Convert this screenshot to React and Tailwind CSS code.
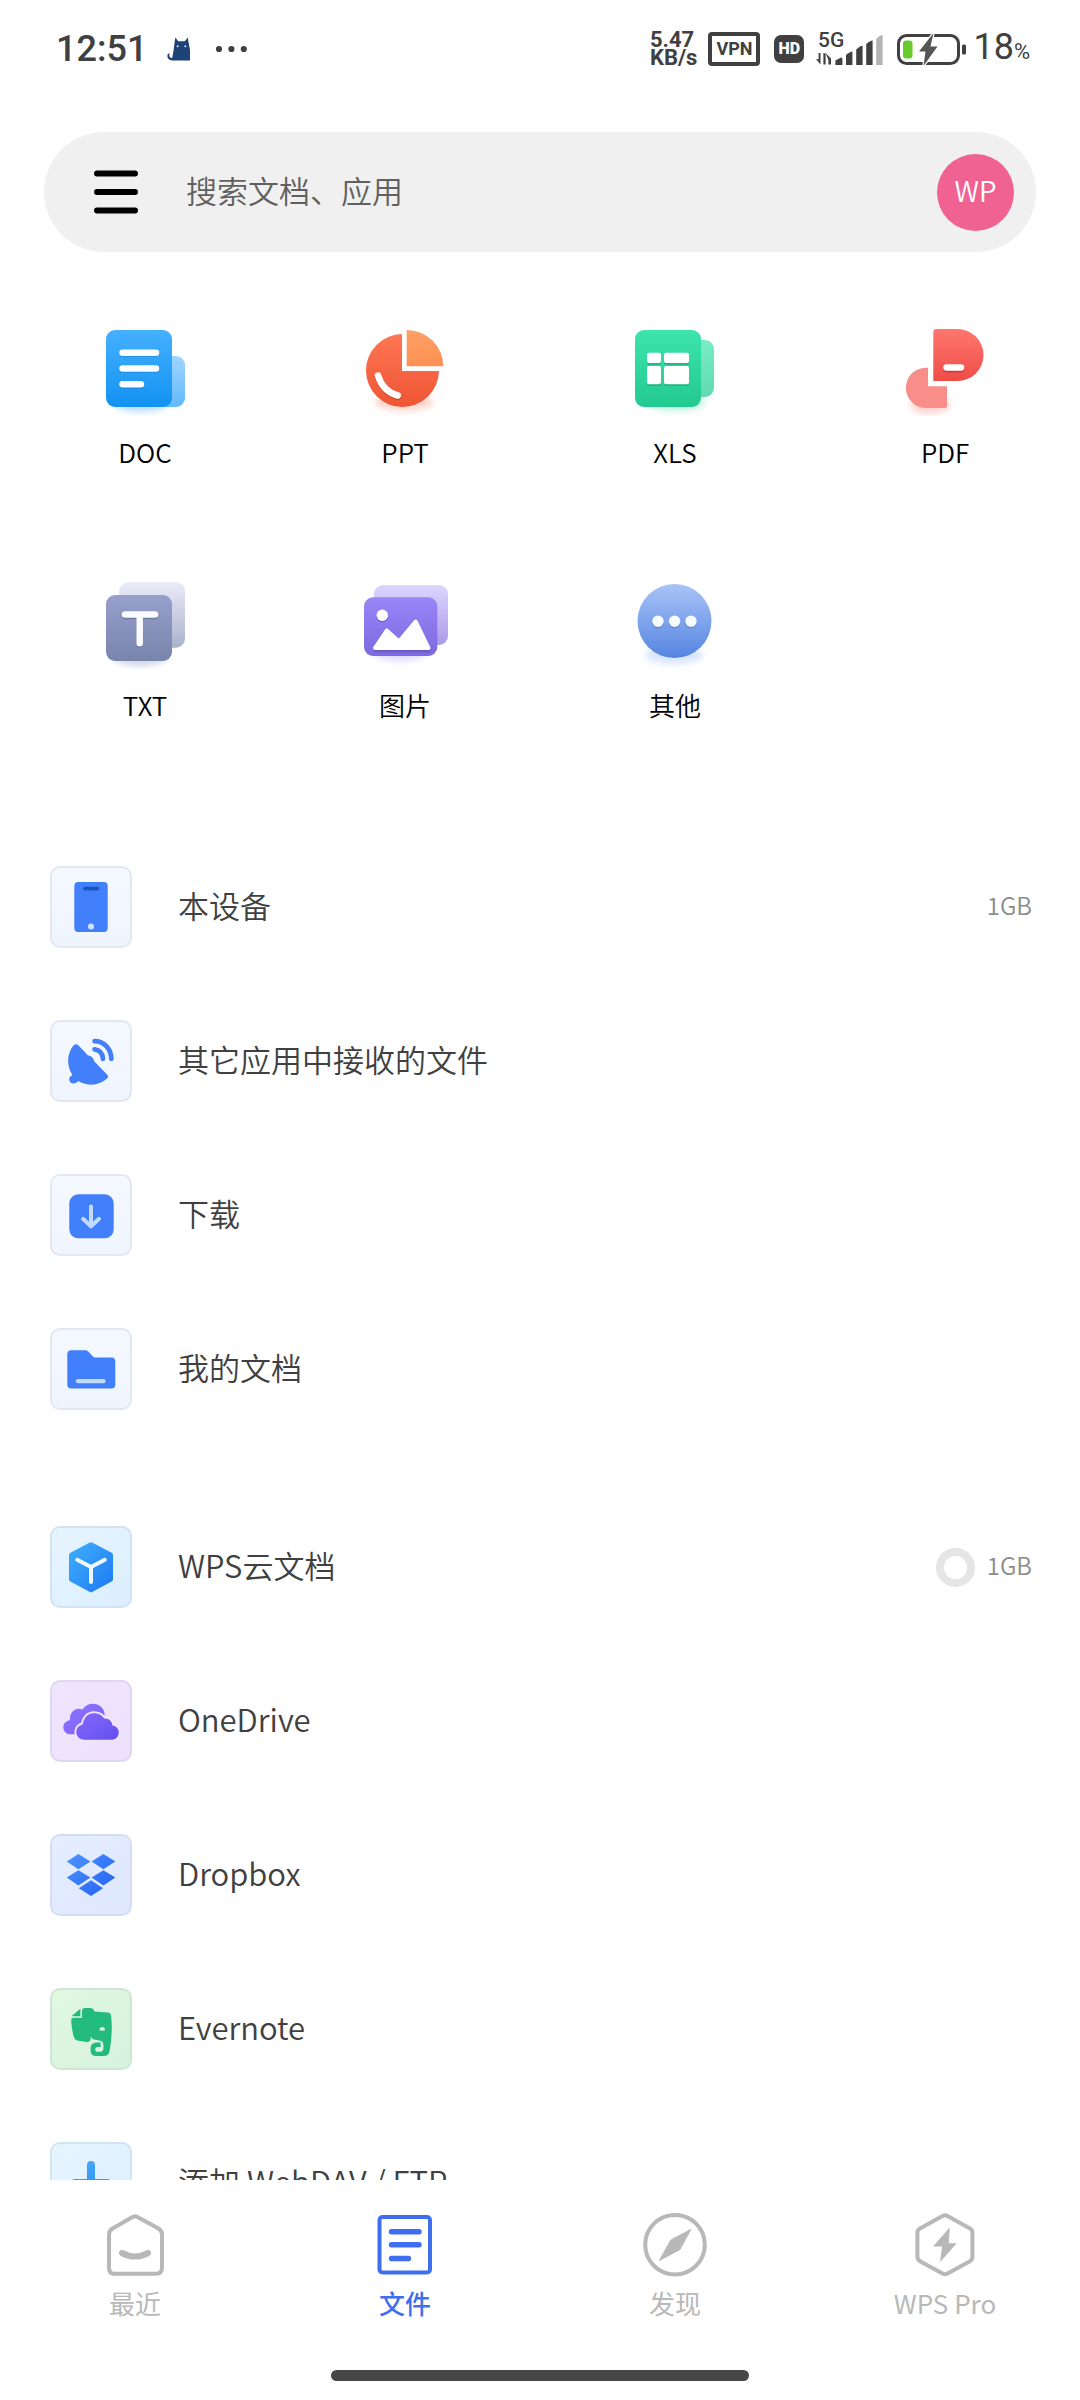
import React from 'react';

const Gradient = ({ id, from, to, diagonal }) => (
  <linearGradient id={id} x1="0" y1="0" x2={diagonal ? '1' : '0'} y2="1">
    <stop offset="0" stopColor={from} />
    <stop offset="1" stopColor={to} />
  </linearGradient>
);

// Soft coloured glow that sits under every category icon
const Glow = ({ color, cx = 44, cy = 83, rx = 27 }) => (
  <ellipse cx={cx} cy={cy} rx={rx} ry="9" fill={color} opacity="0.45" className="blur-[3px]" />
);

const CategorySvg = ({ children }) => (
  <svg viewBox="0 0 96 96" className="h-24 w-24" aria-hidden="true">
    {children}
  </svg>
);

const DocIcon = () => (
  <CategorySvg>
    <defs>
      <Gradient id="doc-front" from="#45b0fe" to="#1292f2" />
      <Gradient id="doc-back" from="#9fd5ff" to="#62b9fc" />
    </defs>
    <Glow color="#6bb1f5" />
    <rect x="56" y="36" width="32" height="51" rx="9" fill="url(#doc-back)" />
    <rect x="9" y="10" width="66" height="77" rx="9" fill="url(#doc-front)" />
    <path d="M25.5 33.7H59M25.5 49.7H59M25.5 65.5H44" stroke="#0b6fc4" strokeOpacity="0.35" strokeWidth="6.5" strokeLinecap="round" />
    <path d="M25.5 32.7H59M25.5 48.5H59M25.5 64.3H44" stroke="#fafdff" strokeWidth="6.5" strokeLinecap="round" />
  </CategorySvg>
);

const PptIcon = () => (
  <CategorySvg>
    <defs>
      <Gradient id="ppt-front" from="#fe7656" to="#ee5532" />
      <Gradient id="ppt-slice" from="#ffa066" to="#fc9153" />
    </defs>
    <Glow color="#f9a38a" cx={47} cy={82} rx={29} />
    <path d="M45 14A36.5 36.5 0 1 0 82 51H45Z" fill="url(#ppt-front)" />
    <path d="M49.7 10A36.5 36.5 0 0 1 86.3 46.3H49.7Z" fill="url(#ppt-slice)" />
    <path d="M21 57C24 67 30 74 40.7 77" fill="none" stroke="#a92c10" strokeOpacity="0.35" strokeWidth="6.5" strokeLinecap="round" />
    <path d="M21 55.5C24 65.5 30 72.5 40.7 75.5" fill="none" stroke="#fff" strokeWidth="6.5" strokeLinecap="round" />
  </CategorySvg>
);

const XlsIcon = () => (
  <CategorySvg>
    <defs>
      <Gradient id="xls-front" from="#3de4ac" to="#22c991" />
      <Gradient id="xls-back" from="#77edc5" to="#62d9b0" />
    </defs>
    <Glow color="#6fe3b8" cx={48} cy={82} rx={30} />
    <rect x="56" y="20" width="31" height="57" rx="9" fill="url(#xls-back)" />
    <rect x="8" y="10" width="66" height="77" rx="9" fill="url(#xls-front)" />
    <g fill="#0d8a5e" fillOpacity="0.4">
      <rect x="20" y="34" width="14" height="11" rx="2" />
      <rect x="37" y="34" width="25" height="11" rx="2" />
      <rect x="20" y="47.5" width="14" height="18.5" rx="2" />
      <rect x="37" y="47.5" width="25" height="18.5" rx="2" />
    </g>
    <g fill="#fff">
      <rect x="20" y="32.7" width="14" height="10.3" rx="2" />
      <rect x="37" y="32.7" width="25" height="10.3" rx="2" />
      <rect x="20" y="46" width="14" height="18.3" rx="2" />
      <rect x="37" y="46" width="25" height="18.3" rx="2" />
    </g>
  </CategorySvg>
);

const PdfIcon = () => (
  <CategorySvg>
    <defs>
      <Gradient id="pdf-front" from="#ff7770" to="#ef4c47" />
    </defs>
    <Glow color="#f7a09c" cx={33} cy={85} rx={20} />
    <path d="M29 47.7H31V66.3H50V86a2 2 0 0 1-2 2H29A20.1 20.1 0 0 1 29 47.7Z" fill="#f88d89" />
    <path d="M39.3 9H60.5A26 26 0 0 1 60.5 61H36.3V12a3 3 0 0 1 3-3Z" fill="url(#pdf-front)" />
    <path d="M49.5 49H64" stroke="#9c1f1b" strokeOpacity="0.4" strokeWidth="7" strokeLinecap="round" />
    <path d="M49.5 47.6H64" stroke="#fff" strokeWidth="6.5" strokeLinecap="round" />
  </CategorySvg>
);

const TxtIcon = () => (
  <CategorySvg>
    <defs>
      <Gradient id="txt-front" from="#97a0cc" to="#7885ab" />
      <Gradient id="txt-back" from="#ebebf9" to="#a9b2cd" />
    </defs>
    <Glow color="#9aa5cc" cx={43} cy={84} />
    <rect x="22.3" y="9" width="65.7" height="65.7" rx="9" fill="url(#txt-back)" />
    <rect x="9" y="22" width="66" height="66" rx="9" fill="url(#txt-front)" />
    <path d="M28 43H58M42.7 43V71.5" stroke="#444f78" strokeOpacity="0.4" strokeWidth="6.5" strokeLinecap="round" />
    <path d="M28 41.5H58M42.7 41.5V70.3" stroke="#fafbff" strokeWidth="6.5" strokeLinecap="round" />
  </CategorySvg>
);

const ImageIcon = () => (
  <CategorySvg>
    <defs>
      <Gradient id="img-front" from="#9885f8" to="#7e6ae0" />
      <Gradient id="img-back" from="#dcd5fe" to="#a99be8" />
    </defs>
    <Glow color="#b9aefa" cx={43} cy={79} />
    <rect x="17" y="12" width="74" height="60" rx="9" fill="url(#img-back)" />
    <rect x="7" y="24.3" width="73.3" height="58.7" rx="9" fill="url(#img-front)" />
    <circle cx="25.3" cy="43.6" r="5.7" fill="#4c3aa8" fillOpacity="0.4" />
    <circle cx="25.3" cy="42.3" r="5.7" fill="#fff" />
    <path d="M18 76L29.7 58L42 68.5L58.7 49L71.5 76Z" transform="translate(0 1.5)" fill="#4c3aa8" fillOpacity="0.45" stroke="#4c3aa8" strokeOpacity="0.3" strokeWidth="4" strokeLinejoin="round" />
    <path d="M18 75L29.7 57.5L42 68.5L58.7 48.5L71.5 75Z" fill="#fff" stroke="#fff" strokeWidth="4" strokeLinejoin="round" />
  </CategorySvg>
);

const OtherIcon = () => (
  <CategorySvg>
    <defs>
      <Gradient id="other-front" from="#a9c3f7" to="#5585e0" />
    </defs>
    <Glow color="#a9c6ff" cx={47} cy={82} rx={29} />
    <circle cx="47.5" cy="48" r="37" fill="url(#other-front)" />
    <g fill="#3a63b8" fillOpacity="0.4">
      <circle cx="31" cy="49.6" r="5.7" />
      <circle cx="47.6" cy="49.6" r="5.7" />
      <circle cx="64" cy="49.6" r="5.7" />
    </g>
    <g fill="#f7fdff">
      <circle cx="31" cy="48.3" r="5.7" />
      <circle cx="47.6" cy="48.3" r="5.7" />
      <circle cx="64" cy="48.3" r="5.7" />
    </g>
  </CategorySvg>
);

// The view box leaves out the 2px tile border
const TileSvg = ({ children }) => (
  <svg viewBox="2 2 78 78" className="h-full w-full" aria-hidden="true">
    {children}
  </svg>
);

const PhoneIcon = () => (
  <TileSvg>
    <rect x="24.3" y="16" width="33.4" height="50" rx="4" fill="#427ffa" />
    <path d="M34.8 22.6H47.5" stroke="#1655bd" strokeWidth="3.6" strokeLinecap="round" />
    <circle cx="41" cy="60.5" r="3" fill="#cfe0ff" />
  </TileSvg>
);

const DishIcon = () => (
  <TileSvg>
    <path
      d="M23.5 25.5C25 24 27 24 28.6 25.4L38 35.6C40.4 35.6 43.6 37.6 44.4 41.6L57 54.6C58.4 56 58.4 57.4 57 58.6C49 66 38 66.4 28.6 61.2C27.4 61.2 27 63.4 23.4 63.4C20.8 63.4 19.2 61.6 19.2 59.2C19.2 56.8 22 56 22.2 54.6C16.6 46 16.6 34 23.5 25.5Z"
      fill="#427ffa"
    />
    <path d="M44.6 21.2C54 21.2 61 28.6 61.3 38.8M44.6 29.4C49.6 30 52.6 33.4 53 38.8" fill="none" stroke="#427ffa" strokeWidth="4.8" strokeLinecap="round" />
  </TileSvg>
);

const DownloadIcon = () => (
  <TileSvg>
    <rect x="19.3" y="20.3" width="44.4" height="44" rx="9" fill="#427ffa" />
    <path d="M41 32.5V52M33 44.8L41 52.4L49 44.8" fill="none" stroke="#c3dbff" strokeWidth="4" strokeLinecap="round" strokeLinejoin="round" />
  </TileSvg>
);

const FolderIcon = () => (
  <TileSvg>
    <path d="M21.3 22.2H35.4C36.6 22.2 37.4 22.6 38.2 23.4L43 28.4C43.8 29.2 44.4 29.5 45.6 29.5H61.3a4 4 0 0 1 4 4V56.5a4 4 0 0 1-4 4H21.3a4 4 0 0 1-4-4V26.2a4 4 0 0 1 4-4Z" fill="#427ffa" />
    <path d="M28 53.2H53.5" stroke="#c3dbff" strokeWidth="4.2" strokeLinecap="round" />
  </TileSvg>
);

const CloudDocIcon = () => (
  <TileSvg>
    <defs>
      <Gradient id="cube" from="#3fb0fa" to="#1f78f5" diagonal />
    </defs>
    <path d="M39.4 16.8Q41 15.8 42.6 16.8L61.6 26.8Q63 27.6 63 29.2V53.2Q63 54.8 61.6 55.6L42.6 65.8Q41 66.8 39.4 65.8L20.4 55.6Q19 54.8 19 53.2V29.2Q19 27.6 20.4 26.8Z" fill="url(#cube)" />
    <path d="M27.2 33.8L41 41L54.8 33.8M41 41V56" fill="none" stroke="#eef9ff" strokeWidth="4" strokeLinecap="round" strokeLinejoin="round" />
  </TileSvg>
);

const frontCloud =
  'M34.5 59.7C29.8 59.7 26.3 56.4 26.3 52C26.3 48 29.2 45 32.8 44.4C33.6 37.8 38 33.2 44 33.2C48.6 33.2 52.2 35.4 54.2 38.6C58.4 38 62.2 41 62.4 45.6C66 45.8 68.7 48.8 68.7 52.6C68.7 56.6 65.8 59.7 62 59.7Z';

const OneDriveIcon = () => (
  <TileSvg>
    <defs>
      <Gradient id="cloud-back" from="#8f74ff" to="#7a62fb" diagonal />
      <Gradient id="cloud-front" from="#8468fb" to="#6450ee" diagonal />
    </defs>
    <path d="M20.5 54.3C16.4 54.3 13.3 51.2 13.3 47.2C13.3 43.4 16 40.6 20 40.2C19.4 33.6 23.6 28.4 29.4 28.8C30.6 28.8 31.4 29 32.4 29.4C35 25.6 38.6 23.7 43 23.7C49 23.7 54.3 28 54.7 34.5L50 45L30 54.3Z" fill="url(#cloud-back)" />
    <path d={frontCloud} fill="none" stroke="#efe3fd" strokeWidth="4" strokeLinejoin="round" />
    <path d={frontCloud} fill="url(#cloud-front)" />
  </TileSvg>
);

const DropboxIcon = () => (
  <TileSvg>
    <defs>
      <linearGradient id="dropbox" gradientUnits="userSpaceOnUse" x1="20" y1="20" x2="58" y2="62">
        <stop offset="0" stopColor="#4c93ff" />
        <stop offset="1" stopColor="#2563f4" />
      </linearGradient>
    </defs>
    <path
      d="M16.7 27.6L28.4 20L40.4 27.6L28.4 35.3ZM41.6 27.6L53.4 20L65.3 27.6L53.4 35.3ZM16.7 43.6L28.4 36.2L40.4 43.6L28.4 51.4ZM41.6 43.6L53.4 36.2L65.3 43.6L53.4 51.4ZM28.8 54.2L41 46.2L53 54.2L41 62Z"
      fill="url(#dropbox)"
    />
  </TileSvg>
);

const EvernoteIcon = () => (
  <TileSvg>
    <g fill="#23bb7d">
      <path d="M21.4 28.2L30.4 20.8V28.2Z" />
      <path
        fillRule="evenodd"
        d="M32 22.4C32.4 20.8 33.6 20 35.2 20H39.6C42.2 20 43.8 21.2 44.4 23.4L57.6 24.4C60 24.6 60.8 25.6 61 27.6C61.9 34 62 41 61.4 48C61 54 60.4 59 59.4 63.4C58.6 66.8 57 68 54 68H46.6C42.8 68 40.6 66 40.6 62.4V60.4C40.6 56.4 43 54.4 47 54.4H50.6V59H48.2C46.2 59 45.2 59.8 45.2 61.4C45.2 63 46.2 63.8 48 63.8H50C52.4 63.8 53.4 62.4 53.4 60V57C53.4 53.8 51.6 52.4 48 52.2C44 52 42 51.2 40.9 48.6C40.5 52.6 39.8 54.2 37 54L28.6 52.8C25.4 52.4 24.2 51 23.2 46.6C22.2 42 21.4 37 21.2 32.4C21.2 30.6 22 29.8 23.6 29.8H32ZM49.4 42.2C50.8 42.8 53.6 42.8 55 42.2C55 40 54 39 52.2 39C50.4 39 49.4 40 49.4 42.2Z"
      />
    </g>
  </TileSvg>
);

const PlusIcon = () => (
  <TileSvg>
    <defs>
      <linearGradient id="plus" gradientUnits="userSpaceOnUse" x1="41" y1="18" x2="41" y2="62">
        <stop offset="0" stopColor="#45a8f8" />
        <stop offset="1" stopColor="#2487f8" />
      </linearGradient>
    </defs>
    <path d="M41 19a4 4 0 0 1 4 4V37H57a4 4 0 0 1 0 8H45V59a4 4 0 0 1-8 0V45H25a4 4 0 0 1 0-8H37V23a4 4 0 0 1 4-4Z" fill="url(#plus)" />
  </TileSvg>
);

const categories = [
  { label: 'DOC', Icon: DocIcon, className: 'pl-5' },
  { label: 'PPT', Icon: PptIcon },
  { label: 'XLS', Icon: XlsIcon },
  { label: 'PDF', Icon: PdfIcon },
  { label: 'TXT', Icon: TxtIcon, className: 'pl-5' },
  { label: '图片', Icon: ImageIcon },
  { label: '其他', Icon: OtherIcon }
];

const plainTile = 'border-[#e2e7f1] bg-linear-to-b from-[#f5f9ff] to-[#eff5ff]';
const blueTile = 'border-[#d3e3f1] bg-linear-to-br from-[#e6f5ff] to-[#dceeff]';

const localPlaces = [
  { label: '本设备', Icon: PhoneIcon, tile: plainTile, size: '1GB' },
  { label: '其它应用中接收的文件', Icon: DishIcon, tile: plainTile },
  { label: '下载', Icon: DownloadIcon, tile: plainTile },
  { label: '我的文档', Icon: FolderIcon, tile: plainTile }
];

const cloudPlaces = [
  { label: 'WPS云文档', Icon: CloudDocIcon, tile: blueTile, size: '1GB', ring: true },
  { label: 'OneDrive', Icon: OneDriveIcon, tile: 'border-[#dfd6f0] bg-linear-to-br from-[#eee5fe] to-[#efe0fd]' },
  { label: 'Dropbox', Icon: DropboxIcon, tile: 'border-[#d5ddf0] bg-linear-to-br from-[#e6edff] to-[#dde7ff]' },
  { label: 'Evernote', Icon: EvernoteIcon, tile: 'border-[#cfe6d6] bg-linear-to-br from-[#e1f8e1] to-[#d6f2dd]' },
  { label: '添加 WebDAV / FTP', Icon: PlusIcon, tile: blueTile }
];

const tabs = [
  {
    label: '最近',
    icon: (
      <>
        <path d="M29.5 4Q32 2.5 34.5 4L55.5 15.5Q59 17.8 59 21.5V54.5Q59 60.7 53 60.7H11Q6 60.7 6 54.5V21.5Q6 17.8 9.5 15.5Z" />
        <path d="M19 40Q32 47 45 40" strokeWidth="6" />
      </>
    )
  },
  {
    label: '文件',
    active: true,
    icon: (
      <>
        <rect x="6.5" y="4" width="50.5" height="55.5" rx="3" />
        <path d="M18.5 18.7H46M18.5 31.7H46M18.5 45.5H35.5" strokeWidth="5.5" />
      </>
    )
  },
  {
    label: '发现',
    icon: (
      <>
        <circle cx="32" cy="31.7" r="29.8" />
        <path d="M47.6 16.6L27.9 27L16.4 47.4L36.6 36.8Z" fill="currentColor" strokeWidth="1" />
      </>
    )
  },
  {
    label: 'WPS Pro',
    icon: (
      <>
        <path d="M29.5 3Q32 1.6 34.5 3L57 15.4Q59.4 17 59.4 19.5V44Q59.4 46.5 57 48.2L34.5 60.6Q32 62 29.5 60.6L7 48.2Q4.4 46.5 4.4 44V19.5Q4.4 17 7 15.4Z" />
        <path d="M36.8 14.3L20 33.6H29L27 49.3L43.7 30.3H35.7Z" fill="currentColor" stroke="none" />
      </>
    )
  }
];

const StatusBar = () => (
  <div className="flex h-[98px] shrink-0 items-center justify-between pr-[50px] pl-14 font-['Roboto',sans-serif] text-[#404040]">
    <div className="flex items-center">
      <span className="text-[36px] leading-10 font-medium">12:51</span>
      <svg viewBox="0 0 36 36" className="ml-4 h-9 w-9" aria-hidden="true">
        <path
          d="M12.4 6.4L15.2 10.2H21.8L24.8 6.4L25.4 10.4L27 19V29.4H9.4C6 29.4 4.4 27.2 4.4 25C4.4 23 5.4 22.2 6.8 22.2C5.8 24.4 6.4 27 9.2 27L10.6 19L11.6 11Z"
          fill="#1c4276"
        />
        <circle cx="14.6" cy="15.2" r="1" fill="#dfe9f5" />
        <circle cx="22.4" cy="15.2" r="1" fill="#dfe9f5" />
      </svg>
      <svg viewBox="0 0 32 8" className="ml-4 h-2 w-8" fill="currentColor" aria-hidden="true">
        <circle cx="4" cy="4" r="3.1" />
        <circle cx="16.4" cy="4" r="3.1" />
        <circle cx="28.8" cy="4" r="3.1" />
      </svg>
    </div>

    <div className="flex items-center">
      <div className="text-[22px] leading-[18px] font-bold">
        <div>5.47</div>
        <div>KB/s</div>
      </div>
      <div className="ml-[11px] flex h-[34px] w-[52px] items-center justify-center rounded-[4px] border-4 border-current text-[18px] leading-5 font-bold">
        VPN
      </div>
      <div className="ml-[14px] flex h-7 w-[30px] items-center justify-center rounded-[7px] bg-[#404040] text-[16px] leading-5 font-black text-white">
        HD
      </div>
      <svg viewBox="0 0 68 40" className="ml-3 h-10 w-[68px]" fill="currentColor" aria-hidden="true">
        <text x="2" y="18" fontSize="21" fontWeight="500">5G</text>
        <path d="M4.5 24V35.5L0 30.2H2.6V24ZM7.4 35.5V24L9.6 24.6V35.5ZM9.6 24L15 29.6V35.5H12.4V31Z" />
        <path d="M19.4 31.5L25 28.4Q26.4 28.4 26.4 30V36H19.4ZM30 26Q34 22.4 36.4 22.4V36H30ZM40.2 20.6Q44 16.8 46.6 16.8V36H40.2ZM50.2 15Q54 11.4 56.6 11.4V36H50.2Z" />
        <path d="M60.2 10Q64 6 66.6 6V36H60.2Z" fill="#b3b3b3" />
      </svg>
      <svg viewBox="0 0 70 32" className="ml-[13px] h-8 w-[70px]" aria-hidden="true">
        <rect x="1.5" y="2.5" width="60" height="28" rx="8" fill="none" stroke="currentColor" strokeWidth="3" />
        <rect x="65" y="11.5" width="4" height="10" rx="1.5" fill="currentColor" />
        <rect x="6" y="7.5" width="9.5" height="18" rx="3" fill="#69cc2e" />
        <path d="M36.5 0L22 18.6H28.5L26.5 33L40.5 13.6H33.5Z" fill="#555" stroke="#fff" strokeWidth="2.5" paintOrder="stroke" />
      </svg>
      <span className="ml-[6px] flex items-baseline">
        <span className="text-[36px] leading-10">18</span>
        <span className="text-[22px] leading-10">%</span>
      </span>
    </div>
  </div>
);

const PlaceRow = ({ label, Icon, tile, size, ring }) => (
  <li>
    <button type="button" className="flex h-[154px] w-full items-center pr-12 pl-[50px] text-left">
      <span className={`flex h-[82px] w-[82px] shrink-0 items-center justify-center rounded-[10px] border-2 ${tile}`}>
        <Icon />
      </span>
      <span className="ml-[46px] flex-1 pb-1 text-[31px] leading-10 font-[350] text-[#404040]">{label}</span>
      {ring && <span className="mr-3 h-[39px] w-[39px] rounded-full border-8 border-[#e5e5e5]" />}
      {size && <span className="pb-1 text-[24px] leading-8 font-[350] text-[#8c8c8c]">{size}</span>}
    </button>
  </li>
);

const App = () => {
  return (
    <div className="flex h-screen flex-col bg-white font-['Noto_Sans_CJK_SC','Noto_Sans',sans-serif]">
      <StatusBar />

      <main className="min-h-0 flex-1 overflow-hidden">
        <div className="mx-11 mt-[34px] flex h-[120px] items-center rounded-full bg-[#f0f0f0] pr-[22px] pl-[50px]">
          <button type="button" aria-label="菜单">
            <svg viewBox="0 0 44 44" className="h-11 w-11" stroke="#000" strokeWidth="6" strokeLinecap="round" aria-hidden="true">
              <path d="M3 3.5H41M3 22H41M3 40.5H41" />
            </svg>
          </button>
          <input
            type="search"
            aria-label="搜索文档、应用"
            placeholder="搜索文档、应用"
            className="ml-12 min-w-0 flex-1 bg-transparent pb-1 text-[31px] leading-10 font-[350] text-[#606060] outline-none placeholder:text-[#606060]"
          />
          <button type="button" className="flex h-[77px] w-[77px] items-center justify-center rounded-full bg-[#f06292] pb-1 text-[28px] leading-8 font-[350] text-white">
            WP
          </button>
        </div>

        <div className="mt-[68px] grid grid-cols-4 gap-y-[101px]">
          {categories.map(({ label, Icon, className }) => (
            <button key={label} type="button" className={`flex flex-col items-center gap-4 ${className || ''}`}>
              <Icon />
              <span className="text-[26px] leading-10 font-[350] text-black">{label}</span>
            </button>
          ))}
        </div>

        <ul className="mt-[105px]">
          {localPlaces.map((place) => (
            <PlaceRow key={place.label} {...place} />
          ))}
        </ul>
        <ul className="mt-11">
          {cloudPlaces.map((place) => (
            <PlaceRow key={place.label} {...place} />
          ))}
        </ul>
      </main>

      <nav className="shrink-0 bg-white pt-[33px] pb-[19px]">
        <div className="grid grid-cols-4">
          {tabs.map(({ label, active, icon }) => (
            <a key={label} href="#" className={`flex flex-col items-center gap-1.5 ${active ? 'text-[#3f6ef0]' : 'text-[#b8b8b8]'}`}>
              <svg viewBox="0 0 64 64" className="h-16 w-16" fill="none" stroke="currentColor" strokeWidth="4" strokeLinecap="round" strokeLinejoin="round" aria-hidden="true">
                {icon}
              </svg>
              <span className={`text-[26px] leading-10 ${active ? 'font-medium' : 'font-normal'}`}>{label}</span>
            </a>
          ))}
        </div>
        <div className="mx-auto mt-[47px] h-[11px] w-[418px] rounded-full bg-[#474747]" />
      </nav>
    </div>
  );
};

export default App;
